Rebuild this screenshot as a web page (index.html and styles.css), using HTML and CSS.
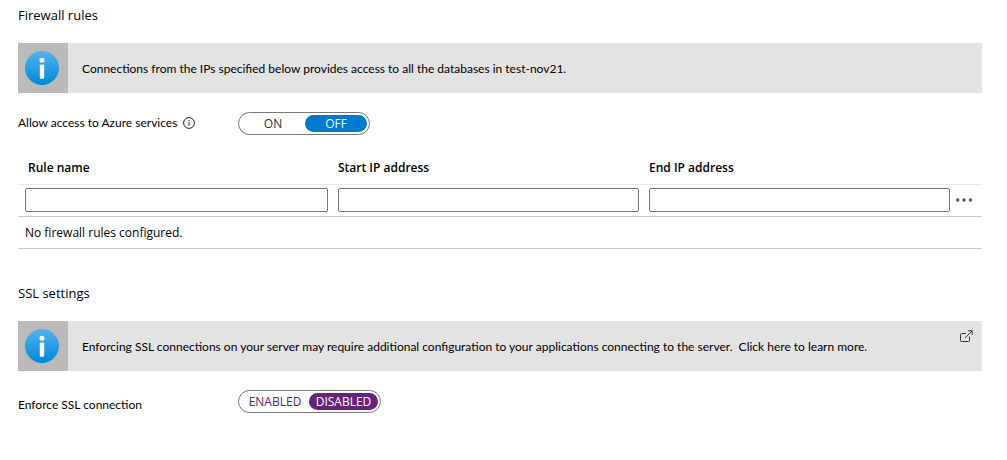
FILE: index.html
```html
<!DOCTYPE html>
<html lang="en">
<head>
<meta charset="utf-8">
<title>Connection security</title>
<link rel="stylesheet" href="styles.css">
</head>
<body>
<svg class="defs" width="0" height="0" aria-hidden="true">
  <defs>
    <linearGradient id="info-fill" x1="0" y1="0" x2="0" y2="1">
      <stop offset="0" stop-color="#54b3ec"/>
      <stop offset="1" stop-color="#0089d8"/>
    </linearGradient>
    <symbol id="info" viewBox="0 0 34 34">
      <circle cx="17" cy="17" r="17" fill="url(#info-fill)"/>
      <circle cx="17" cy="9.2" r="2.5" fill="#fff"/>
      <rect x="14.8" y="13.5" width="4.4" height="14.3" rx="1" fill="#fff"/>
    </symbol>
  </defs>
</svg>
<main class="page">
  <section class="section">
    <h2 class="heading">Firewall rules</h2>
    <div class="banner">
      <span class="banner-icon"><svg width="34" height="34" aria-hidden="true"><use href="#info"/></svg></span>
      <p class="banner-text">Connections from the IPs specified below provides access to all the databases in test-nov21.</p>
    </div>
    <div class="field" role="radiogroup" aria-labelledby="azure-label">
      <div class="field-name">
        <span id="azure-label">Allow access to Azure services</span>
        <svg width="12" height="12" viewBox="0 0 12 12" aria-hidden="true">
          <circle cx="6" cy="6" r="5.4" fill="none" stroke="#222" stroke-width="1"/>
          <path d="M6 5v4M6 3v1" stroke="#333" stroke-width="1.1"/>
        </svg>
      </div>
      <div class="toggle toggle-blue">
        <label class="option"><input type="radio" name="azure"><span>ON</span></label>
        <label class="option"><input type="radio" name="azure" checked><span>OFF</span></label>
      </div>
    </div>
    <table class="rules">
      <colgroup><col class="col-name"><col class="col-ip"><col class="col-ip"><col class="col-menu"></colgroup>
      <thead>
        <tr><th scope="col">Rule name</th><th scope="col">Start IP address</th><th scope="col">End IP address</th><th></th></tr>
      </thead>
      <tbody>
        <tr class="entry">
          <td><input class="box" type="text" aria-label="Rule name"></td>
          <td><input class="box" type="text" aria-label="Start IP address"></td>
          <td><input class="box" type="text" aria-label="End IP address"></td>
          <td class="menu-cell"><button class="menu" type="button" aria-label="More actions"><svg width="18" height="4" viewBox="0 0 18 4" aria-hidden="true"><g fill="#555"><circle cx="2.7" cy="2" r="1.7"/><circle cx="9.1" cy="2" r="1.7"/><circle cx="15.5" cy="2" r="1.7"/></g></svg></button></td>
        </tr>
        <tr class="empty"><td colspan="4">No firewall rules configured.</td></tr>
      </tbody>
    </table>
  </section>
  <section class="section">
    <h2 class="heading">SSL settings</h2>
    <a class="banner" href="#">
      <span class="banner-icon"><svg width="34" height="34" aria-hidden="true"><use href="#info"/></svg></span>
      <span class="banner-text">Enforcing SSL connections on your server may require additional configuration to your applications connecting to the server.&nbsp; Click here to learn more.</span>
      <svg class="external" width="13" height="13" viewBox="0 0 13 13" aria-hidden="true" fill="none" stroke="#333" stroke-width="1">
        <path d="M6 3.5H1.5Q.5 3.5 .5 4.5V10.5Q.5 11.5 1.5 11.5H8.5Q9.5 11.5 9.5 10.5V6.5M5 8L12 1M8 .8H12.2V5"/>
      </svg>
    </a>
    <div class="field field-ssl" role="radiogroup" aria-labelledby="ssl-label">
      <div class="field-name"><span id="ssl-label">Enforce SSL connection</span></div>
      <div class="toggle toggle-purple">
        <label class="option"><input type="radio" name="ssl"><span>ENABLED</span></label>
        <label class="option"><input type="radio" name="ssl" checked><span>DISABLED</span></label>
      </div>
    </div>
  </section>
</main>
</body>
</html>
```
FILE: styles.css
```css
* { box-sizing: border-box; }
body {
  margin: 0;
  background: #fff;
  color: #000;
  font: 12px/18px "Open Sans", "Noto Sans", sans-serif;
}
.defs { position: absolute; }
.page { padding: 5px 25px 0 18px; }
.section { margin-bottom: 34px; }
.heading { margin: 0 0 18px; font-size: 13px; line-height: 20px; font-weight: 400; }
.banner {
  display: flex;
  min-height: 50px;
  background: #e3e3e3;
  color: inherit;
  text-decoration: none;
}
.banner-icon {
  display: flex;
  flex: 0 0 50px;
  align-items: center;
  padding-left: 7px;
  background: #bababa;
}
.banner-text { flex: 1; align-self: center; margin: 0; padding: 2px 0 0 14px; }
.banner-text, .field-name { font-family: Lato, "Open Sans", sans-serif; }
.external { flex: none; margin: 9px 9px 0 0; }
.field { display: flex; align-items: flex-start; margin-top: 19px; }
.field-name { display: flex; flex: 0 0 220px; align-items: center; gap: 6px; padding-top: 2px; }
.field-ssl .field-name { padding-top: 6px; }
.toggle {
  display: flex;
  height: 23px;
  padding: 2px;
  border: 1px solid #777;
  border-radius: 12px;
}
.option { display: flex; position: relative; cursor: pointer; }
.option input { position: absolute; inset: 0; margin: 0; opacity: 0; }
.option span { height: 17px; border-radius: 9px; line-height: 17px; text-align: center; }
.toggle-blue span { width: 64px; color: #333; }
.toggle-purple span { width: 68px; color: #68217a; }
.toggle-blue input:checked + span { width: 62px; background: #007ad1; color: #fff; font-weight: 500; }
.toggle-purple input:checked + span { width: 69px; background: #68217a; color: #fff; font-weight: 500; }
.rules {
  width: 100%;
  margin-top: 17px;
  border-spacing: 0;
  table-layout: fixed;
}
.col-name { width: 315px; }
.col-menu { width: 27px; }
.rules th {
  height: 33px;
  padding: 0 5px;
  border-bottom: 1px solid #e8e8e8;
  text-align: left;
  font-weight: 600;
}
.rules th:first-child { padding-left: 10px; }
.rules td { padding: 3px 5px 4px; border-bottom: 1px solid #c8c8c8; }
.rules td:first-child { padding-left: 7px; }
.box {
  display: block;
  width: 100%;
  height: 24px;
  padding: 0 6px;
  border: 1px solid #777;
  border-radius: 2px;
  background: #fff;
  font: inherit;
}
.rules .menu-cell { padding: 0 0 2px; }
.menu { display: flex; padding: 0; border: 0; background: none; cursor: pointer; }
.rules .empty td { height: 32px; padding-top: 5px; }
```
